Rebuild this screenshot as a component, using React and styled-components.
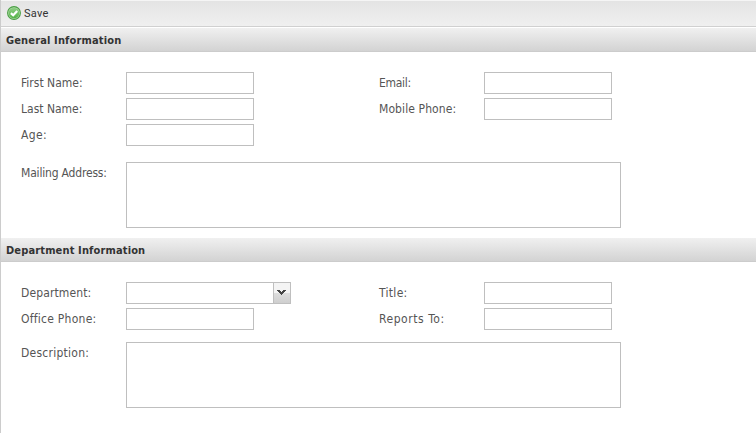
import React from 'react';
import styled, { createGlobalStyle } from 'styled-components';

const general = {
  title: 'General Information',
  columns: [
    [{ label: 'First Name:' }, { label: 'Last Name:' }, { label: 'Age:', spacing: 0.4 }],
    [{ label: 'Email:', spacing: -0.3 }, { label: 'Mobile Phone:', spacing: 0.1 }],
  ],
  memo: { label: 'Mailing Address:', spacing: -0.18, gap: 16 },
};

const department = {
  title: 'Department Information',
  columns: [
    [{ label: 'Department:', spacing: 0.12, select: true }, { label: 'Office Phone:', spacing: 0.25 }],
    [{ label: 'Title:', spacing: 0.3 }, { label: 'Reports To:', spacing: 0.55 }],
  ],
  memo: { label: 'Description:', spacing: 0.25, gap: 12 },
};

const SaveIcon = () => (
  <svg width="14" height="14" viewBox="0 0 14 14">
    <defs>
      <linearGradient id="saveFill" x1="0" y1="0" x2="0" y2="1">
        <stop offset="0" stopColor="#8fce85" />
        <stop offset="1" stopColor="#55b348" />
      </linearGradient>
    </defs>
    <circle cx="7" cy="7" r="6.4" fill="#b4dcac" stroke="#4a9f44" strokeWidth="1.1" />
    <circle cx="7" cy="7" r="5.3" fill="url(#saveFill)" />
    <path d="M3.9 7.1 L6.2 9.3 L10.2 5" fill="none" stroke="#fff" strokeWidth="2.2" />
  </svg>
);

const ArrowIcon = () => (
  <svg width="9" height="6" viewBox="0 0 9 6" shapeRendering="crispEdges">
    <path d="M0 0h3v1h1v1h1v-1h1v-1h3v1h-1v1h-1v1h-1v1h-1v1h-1v-1h-1v-1h-1v-1h-1v-1h-1z" fill="#444" />
  </svg>
);

const Section = ({ data }) => (
  <section>
    <SectionTitle>{data.title}</SectionTitle>
    <SectionBody>
      <Columns>
        {data.columns.map((fields, i) => (
          <Column key={`column_${i}`}>
            {fields.map((v) => (
              <Field key={v.label}>
                <Label $spacing={v.spacing}>{v.label}</Label>
                {v.select ? (
                  <SelectBox>
                    <SelectInput />
                    <SelectButton type="button"><ArrowIcon /></SelectButton>
                  </SelectBox>
                ) : (
                  <Input />
                )}
              </Field>
            ))}
          </Column>
        ))}
      </Columns>
      <MemoField $gap={data.memo.gap}>
        <Label $spacing={data.memo.spacing}>{data.memo.label}</Label>
        <Memo />
      </MemoField>
    </SectionBody>
  </section>
);

const App = () => {
  return (
    <>
      <GlobalStyle />
      <Page>
        <Toolbar>
          <SaveButton type="button">
            <SaveIcon />
            <span>Save</span>
          </SaveButton>
        </Toolbar>
        <Section data={general} />
        <Section data={department} />
      </Page>
    </>
  );
};

const GlobalStyle = createGlobalStyle`
  *{
    box-sizing: border-box;
  }
  body{
    margin: 0;
    background: #fff;
    overflow: hidden;
  }
`;

const Page = styled.div`
  height: 433px;
  border-left: 1px solid #ccc;
  overflow: hidden;
  font-family: 'DejaVu Sans Condensed', 'DejaVu Sans', sans-serif;
  font-size: 12px;
`;

const Toolbar = styled.div`
  display: flex;
  align-items: center;
  height: 28px;
  padding-left: 6px;
  border-top: 1px solid #f5f5f5;
  border-bottom: 1px solid #fff;
  background: linear-gradient(#e4e4e4, #f0f0f0);
  box-shadow: inset 0 -1px 0 #d0d0d0;
`;

const SaveButton = styled.button`
  display: flex;
  align-items: center;
  gap: 3px;
  height: 22px;
  margin-bottom: 2px;
  padding: 0;
  border: none;
  background: none;
  color: #333;
  font-family: Roboto, 'Liberation Sans', sans-serif;
  font-size: 11px;
  line-height: 14px;
  letter-spacing: 0.3px;
  span{
    padding-top: 1px;
  }
`;

const SectionTitle = styled.h2`
  height: 24px;
  margin: 0;
  padding: 1px 0 0 5px;
  border-bottom: 1px solid #ccc;
  background: linear-gradient(#f0f0f0, #d3d3d3);
  color: #333;
  font-size: 11px;
  font-weight: 700;
  letter-spacing: 0.14px;
  line-height: 24px;
`;

const SectionBody = styled.div`
  padding: 20px 0 10px 20px;
`;

const Columns = styled.div`
  display: flex;
`;

const Column = styled.div`
  display: flex;
  flex-direction: column;
  gap: 4px;
  width: 358px;
`;

const Field = styled.label`
  display: flex;
  height: 22px;
`;

const MemoField = styled(Field)`
  height: 66px;
  margin-top: ${(props) => props.$gap}px;
`;

const Label = styled.span`
  width: 105px;
  color: #555;
  letter-spacing: ${(props) => props.$spacing || 0}px;
  line-height: 22px;
  white-space: nowrap;
`;

const Input = styled.input`
  width: 128px;
  height: 22px;
  padding: 0 4px;
  border: 1px solid #bfbfbf;
  border-radius: 0;
  background: #fff;
  font: inherit;
  outline: none;
`;

const SelectBox = styled.div`
  display: flex;
  width: 165px;
  border: 1px solid #bfbfbf;
`;

const SelectInput = styled(Input)`
  width: 146px;
  height: 20px;
  border: none;
`;

const SelectButton = styled.button`
  display: flex;
  align-items: center;
  justify-content: center;
  width: 17px;
  height: 20px;
  padding: 0 2px 1px 0;
  border: none;
  border-left: 1px solid #bfbfbf;
  background: linear-gradient(#f4f4f4 50%, #dedede 50%, #cfcfcf);
`;

const Memo = styled.textarea`
  width: 495px;
  height: 66px;
  padding: 4px;
  border: 1px solid #bfbfbf;
  border-radius: 0;
  background: #fff;
  font: inherit;
  outline: none;
  resize: none;
`;

export default App;
